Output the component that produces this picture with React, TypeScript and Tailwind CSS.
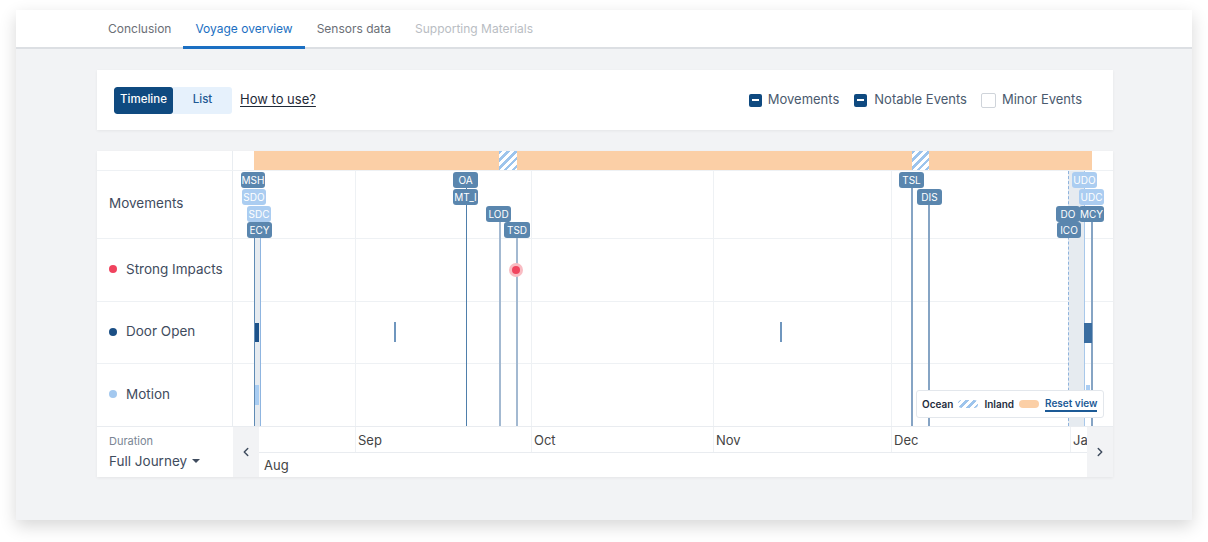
import React from 'react';
import { ChevronLeft, ChevronRight } from 'lucide-react';

type Lbl = { t: string; x: number; y: number; d: boolean; w?: number };
const labels: Lbl[] = [
  { t: 'MSH', x: 8, y: 21, d: true, w: 24 },
  { t: 'SDO', x: 9, y: 38, d: false, w: 24 },
  { t: 'SDC', x: 14, y: 55, d: false, w: 24 },
  { t: 'ECY', x: 14, y: 71, d: true },
  { t: 'OA', x: 220, y: 21, d: true },
  { t: 'MT_I', x: 220, y: 38, d: true },
  { t: 'LOD', x: 253, y: 55, d: true },
  { t: 'TSD', x: 271, y: 71, d: true, w: 26 },
  { t: 'TSL', x: 666, y: 21, d: true },
  { t: 'DIS', x: 684, y: 38, d: true },
  { t: 'UDO', x: 839, y: 21, d: false },
  { t: 'UDC', x: 846, y: 38, d: false },
  { t: 'DO', x: 823, y: 55, d: true, w: 24 },
  { t: 'MCY', x: 846, y: 55, d: true },
  { t: 'ICO', x: 824, y: 71, d: true, w: 24 },
];

type Ln = { x: number; top: number; w: number; c: string };
const lines: Ln[] = [
  { x: 233, top: 37, w: 1, c: '#4f7fab' },
  { x: 266, top: 70, w: 2, c: '#a3b9d1' },
  { x: 283, top: 87, w: 2, c: '#a3b9d1' },
  { x: 678, top: 36, w: 2, c: '#86a4c4' },
  { x: 695, top: 53, w: 2, c: '#86a4c4' },
  { x: 851, top: 20, w: 1, c: '#a8c8ea' },
  { x: 858, top: 70, w: 2, c: '#86a4c4' },
];

const grid = [122, 298, 480, 658, 837];

const months: { m: string; w: string }[] = [
  { m: 'Sep', w: 'w-[176px]' },
  { m: 'Oct', w: 'w-[182px]' },
  { m: 'Nov', w: 'w-[178px]' },
  { m: 'Dec', w: 'w-[179px]' },
  { m: 'Jan', w: 'w-[60px]' },
];

const stripe =
  'bg-[repeating-linear-gradient(135deg,#9dc4ec_0px,#9dc4ec_2.5px,#ffffff_2.5px,#ffffff_5.5px)]';

function Check({ on }: { on: boolean }) {
  return on ? (
    <span className="block w-[13px] h-[13px] rounded-[2px] bg-[#0f4a80] flex items-center justify-center">
      <span className="block w-[7px] h-[2px] bg-white" />
    </span>
  ) : (
    <span className="block w-[15px] h-[15px] rounded-[2px] border border-[#cfd4da] bg-white" />
  );
}

function RowLabel({ dot, text }: { dot?: string; text: string }) {
  return (
    <div className="w-[136px] shrink-0 border-r border-[#e9edf1] flex items-center pl-[12px] pb-[2px] gap-[9px] text-[13.5px] text-[#3f4c5e]">
      {dot && <span className={`w-[8px] h-[8px] rounded-full ${dot}`} />}
      <span>{text}</span>
    </div>
  );
}

export default function App() {
  return (
    <div className="w-[1208px] h-[542px] bg-white pt-[10px] px-[16px] font-['Inter',sans-serif] overflow-hidden">
      <div className="h-[510px] flex flex-col shadow-[0_6px_16px_rgba(0,0,0,0.16)]">
        {/* tabs */}
        <div className="h-[39px] bg-white border-b-2 border-[#dcdfe3] flex items-stretch pl-[80px] text-[12px]">
          <div className="px-[12px] flex items-center text-[#6b6f76]">Conclusion</div>
          <div className="px-[12px] flex items-center text-[#1b6fc2] relative">
            Voyage overview
            <span className="absolute left-0 right-0 -bottom-[2px] h-[3px] bg-[#1b6fc2]" />
          </div>
          <div className="px-[12px] flex items-center text-[#6b6f76]">Sensors data</div>
          <div className="px-[12px] flex items-center text-[#b9bdc3]">Supporting Materials</div>
        </div>

        {/* body */}
        <div className="flex-1 bg-[#f2f3f5] pl-[81px] pt-[21px]">
          {/* toolbar */}
          <div className="w-[1016px] h-[60px] bg-white shadow-[0_1px_3px_rgba(0,0,0,0.06)] flex items-center pl-[17px] pr-[31px]">
            <div className="flex h-[27px] rounded-[3px] overflow-hidden text-[11.5px] font-medium">
              <div className="w-[59px] bg-[#0f4a80] text-white flex items-center justify-center rounded-[3px]">Timeline</div>
              <div className="w-[59px] bg-[#e6f1fc] text-[#1f5a94] flex items-center justify-center">List</div>
            </div>
            <span className="ml-[8px] text-[13px] text-[#1f2937] underline underline-offset-2">How to use?</span>
            <div className="ml-auto flex items-center text-[13px] text-[#4a5a6e]">
              <Check on />
              <span className="ml-[6px]">Movements</span>
              <span className="ml-[15px]"><Check on /></span>
              <span className="ml-[7px]">Notable Events</span>
              <span className="ml-[14px]"><Check on={false} /></span>
              <span className="ml-[6px]">Minor Events</span>
            </div>
          </div>

          {/* timeline card */}
          <div className="mt-[21px] w-[1016px] h-[326px] bg-white shadow-[0_1px_3px_rgba(0,0,0,0.06)] flex flex-col">
            <div className="relative h-[275px] flex flex-col">
              <div className="h-[19px] flex">
                <div className="w-[136px] shrink-0 border-r border-[#e9edf1]" />
              </div>
              <div className="h-[68px] flex border-t border-[#eef1f4]">
                <RowLabel text="Movements" />
              </div>
              <div className="h-[63px] flex border-t border-[#eef1f4]">
                <RowLabel dot="bg-[#f0435e]" text="Strong Impacts" />
              </div>
              <div className="h-[62px] flex border-t border-[#eef1f4]">
                <RowLabel dot="bg-[#1b4f85]" text="Door Open" />
              </div>
              <div className="h-[63px] flex border-t border-[#eef1f4]">
                <RowLabel dot="bg-[#a3c8ef]" text="Motion" />
              </div>

              {/* plot overlay */}
              <div className="absolute left-[136px] top-0 right-0 bottom-0">
                {grid.map((g) => (
                  <span key={g} className="absolute top-[19px] bottom-0 w-px bg-[#eef1f4]" style={{ left: g }} />
                ))}
                {/* journey band */}
                <div className="absolute top-0 left-[21px] w-[838px] h-[19px] bg-[#fbcfa6]" />
                <div className={`absolute top-0 left-[266px] w-[18px] h-[19px] ${stripe}`} />
                <div className={`absolute top-0 left-[679px] w-[17px] h-[19px] ${stripe}`} />

                {/* left cluster band */}
                <div className="absolute left-[21px] top-[87px] bottom-0 w-[7px] bg-[#e6ebf0] border-l border-[#5f8bb5] border-r border-r-[#8fb5e0]" />
                <div className="absolute left-[22px] top-[172px] w-[4px] h-[19px] bg-[#1d5289]" />
                <div className="absolute left-[22px] top-[234px] w-[4px] h-[20px] bg-[#a9cdf2]" />

                {/* right cluster band */}
                <div className="absolute left-[835px] top-[20px] bottom-0 w-[17px] bg-[#e6ebf0] border-l border-dashed border-[#8fb3dd]" />
                {lines.map((l, i) => (
                  <span key={i} className="absolute bottom-0" style={{ left: l.x, top: l.top, width: l.w, background: l.c }} />
                ))}
                <div className="absolute left-[851px] top-[172px] w-[8px] h-[20px] bg-[#3a6da0]" />
                <div className="absolute left-[853px] top-[234px] w-[4px] h-[16px] bg-[#aacdf3]" />

                {/* door open ticks */}
                <span className="absolute left-[161px] top-[171px] w-[2px] h-[20px] bg-[#6f96be]" />
                <span className="absolute left-[547px] top-[171px] w-[2px] h-[20px] bg-[#6f96be]" />

                {/* strong impact */}
                <span className="absolute left-[276px] top-[112px] w-[14px] h-[14px] rounded-full bg-[#f9bcc3]" />
                <span className="absolute left-[279px] top-[115px] w-[8px] h-[8px] rounded-full bg-[#f0455f]" />

                {/* movement labels */}
                {labels.map((l) => (
                  <div
                    key={l.t}
                    className={`absolute h-[16px] rounded-[3px] flex items-center justify-center text-[10px] text-white leading-none ${
                      l.d ? 'bg-[#5a86ae]' : 'bg-[#abcdf1]'
                    }`}
                    style={{ left: l.x, top: l.y, width: l.w ?? 25 }}
                  >
                    {l.t}
                  </div>
                ))}

                {/* legend */}
                <div className="absolute left-[683px] top-[239px] w-[188px] h-[28px] bg-white border border-[#e3e7ec] rounded-[3px] flex items-center pl-[5px] text-[10px] font-semibold text-[#1f2d3d] whitespace-nowrap">
                  <span>Ocean</span>
                  <span className={`ml-[5px] w-[20px] h-[8px] rounded-full ${stripe}`} />
                  <span className="ml-[6px]">Inland</span>
                  <span className="ml-[5px] w-[20px] h-[8px] rounded-full bg-[#fbcfa6]" />
                  <span className="ml-[6px] text-[#1c5a96] border-b-2 border-[#1c5a96] leading-[13px]">Reset view</span>
                </div>
              </div>
            </div>

            {/* axis */}
            <div className="h-[51px] flex border-t border-[#e9ecf0]">
              <div className="w-[136px] shrink-0 pl-[12px] pt-[7px] flex flex-col">
                <span className="text-[11px] text-[#7a8594] leading-[14px]">Duration</span>
                <span className="mt-[4px] text-[13.5px] text-[#3f4c5e] flex items-center gap-[5px] leading-[18px]">
                  Full Journey
                  <span className="w-0 h-0 border-l-[4px] border-r-[4px] border-t-[4px] border-l-transparent border-r-transparent border-t-[#3f4c5e]" />
                </span>
              </div>
              <div className="w-[26px] shrink-0 bg-[#f2f3f5] flex items-center justify-center text-[#3f4c5e]">
                <ChevronLeft size={14} strokeWidth={2.5} />
              </div>
              <div className="flex-1 overflow-hidden flex flex-col">
                <div className="h-[26px] flex border-b border-[#e9ecf0] text-[13px] text-[#444]">
                  <div className="w-[96px] shrink-0" />
                  {months.map((m) => (
                    <div key={m.m} className={`${m.w} shrink-0 border-l border-[#eef1f4] pl-[2px] pt-[4px]`}>
                      {m.m}
                    </div>
                  ))}
                </div>
                <div className="flex-1 text-[13px] text-[#444] pl-[5px] pt-[3px]">Aug</div>
              </div>
              <div className="w-[26px] shrink-0 bg-[#f2f3f5] flex items-center justify-center text-[#3f4c5e]">
                <ChevronRight size={14} strokeWidth={2.5} />
              </div>
            </div>
          </div>
        </div>
      </div>
    </div>
  );
}
